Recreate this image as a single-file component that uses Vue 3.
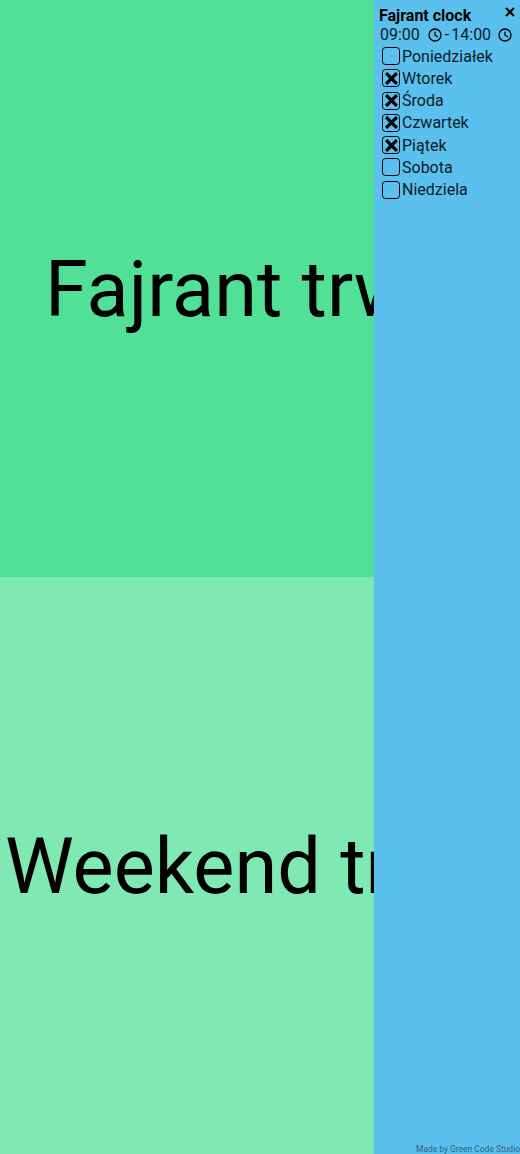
<script setup>
const days = [
  { name: 'Poniedziałek', on: false },
  { name: 'Wtorek', on: true },
  { name: 'Środa', on: true },
  { name: 'Czwartek', on: true },
  { name: 'Piątek', on: true },
  { name: 'Sobota', on: false },
  { name: 'Niedziela', on: false },
]
</script>

<template>
  <div class="page">
    <main class="main">
      <section class="panel fajrant"><div class="big">Fajrant trwa</div></section>
      <section class="panel weekend"><div class="big">Weekend trwa</div></section>
    </main>
    <aside class="side">
      <div class="head">
        <span class="title">Fajrant clock</span>
        <svg class="close" viewBox="0 0 10 10" width="10" height="10"><path d="M1 1L9 9M9 1L1 9" stroke="#000" stroke-width="2" fill="none" /></svg>
      </div>
      <div class="time">
        <span>09:00</span>
        <svg class="clock first" viewBox="0 0 14 14" width="14" height="14"><circle cx="7" cy="7" r="6" fill="none" stroke="#000" stroke-width="1.3" /><path d="M7 3.4V7.2L10 9" fill="none" stroke="#000" stroke-width="1.3" /></svg>
        <span class="dash">-</span>
        <span>14:00</span>
        <svg class="clock second" viewBox="0 0 14 14" width="14" height="14"><circle cx="7" cy="7" r="6" fill="none" stroke="#000" stroke-width="1.3" /><path d="M7 3.4V7.2L10 9" fill="none" stroke="#000" stroke-width="1.3" /></svg>
      </div>
      <ul class="days">
        <li v-for="d in days" :key="d.name" class="day">
          <span class="box">
            <svg v-if="d.on" viewBox="0 0 12 12" width="13" height="13"><path d="M1 1L11 11M11 1L1 11" stroke="#000" stroke-width="3" fill="none" /></svg>
          </span>
          <span class="label">{{ d.name }}</span>
        </li>
      </ul>
      <div class="credit">Made by Green Code Studio</div>
    </aside>
  </div>
</template>

<style scoped>
.page { display: flex; width: 520px; height: 1154px; overflow: hidden; font-family: Roboto, sans-serif; color: #000; }
.main { width: 374px; flex: none; display: flex; flex-direction: column; overflow: hidden; }
.panel { flex: 1; display: flex; align-items: center; overflow: hidden; white-space: nowrap; padding-top: 2px; box-sizing: border-box; }
.fajrant { background: #52df96; }
.weekend { background: #80e8b2; }
.big { font-size: 77.5px; line-height: 94px; }
.fajrant .big { padding-left: 45px; }
.weekend .big { padding-left: 5px; }
.side { position: relative; flex: 1; background: #5bc0ee; padding: 0 5px; box-sizing: border-box; }
.head { display: flex; justify-content: space-between; align-items: center; height: 25px; padding-top: 5px; box-sizing: border-box; }
.title { font-weight: 700; font-size: 16px; color: #000; }
.close { margin-top: -7px; }
.time { display: flex; align-items: center; height: 19px; font-size: 16px; color: #0c1c28; padding-left: 1px; }
.clock.first { margin-left: 8px; }
.dash { margin: 0 2px 0 3px; }
.clock.second { margin-left: 7px; }
.days { list-style: none; margin: 1px 0 0; padding: 0 0 0 3px; }
.day { display: flex; align-items: center; height: 22.25px; font-size: 16px; color: #0c1c28; }
.box { width: 18px; height: 18px; flex: none; box-sizing: border-box; border: 1.7px solid #000; border-radius: 3.5px; display: flex; align-items: center; justify-content: center; margin-right: 2px; }
.credit { position: absolute; right: 0; bottom: 0; font-size: 8.45px; line-height: 10px; color: rgba(0, 0, 0, 0.55); white-space: nowrap; }
</style>
